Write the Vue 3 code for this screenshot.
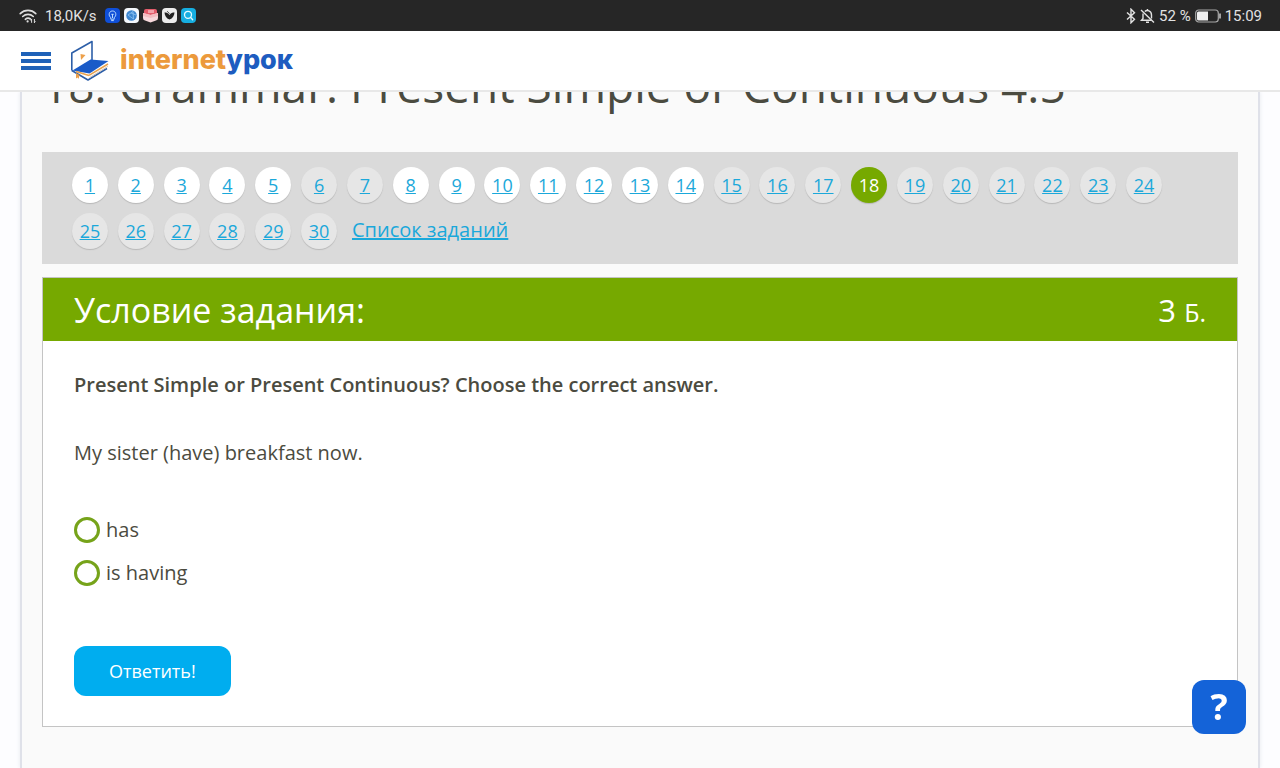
<template>
  <div class="page">
    <!-- Barra de estado -->
    <div class="status-bar">
      <div class="status-group">
        <svg class="wifi" viewBox="0 0 18 16" fill="none" stroke="#dedede" stroke-width="1.6" stroke-linecap="round">
          <path d="M1.2 5.6C5.6 1.3 12.4 1.3 16.8 5.6"></path>
          <path d="M3.7 8.5C6.8 5.6 11.2 5.6 14.3 8.5"></path>
          <path d="M6.3 11.3C7.9 9.9 10 9.9 11.4 11"></path>
          <circle cx="8.6" cy="13.4" r="1.1" fill="#dedede" stroke="none"></circle>
          <path d="M12.6 14.4v-3M12.6 11.2l-.8.9M15.4 11.4v3M15.4 14.6l.8-.9" stroke-width="1"></path>
        </svg>
        <span>18,0K/s</span>
        <div class="app-icons">
          <svg viewBox="0 0 15 15">
            <rect width="15" height="15" rx="4" fill="#0f4fd8"></rect>
            <path d="M5.8 9.6C3.2 7.9 3.7 3 7.5 3s4.3 4.9 1.7 6.6v1.6H5.8z" fill="none" stroke="#bcdcff" stroke-width="1"></path>
            <path d="M6.2 12.6h2.6M7.5 6v4M6.3 6.3h2.4" stroke="#bcdcff" stroke-width="1"></path>
          </svg>
          <svg viewBox="0 0 15 15">
            <rect width="15" height="15" rx="4" fill="#f4f8fc"></rect>
            <circle cx="7.5" cy="7.5" r="5.3" fill="#3d86cf"></circle>
            <path d="M4 7l5-3.5M4 7l5.5 4M9 3.5l.5 7.5M7 5l5 2" stroke="#8dc4f2" stroke-width=".8" fill="none"></path>
          </svg>
          <svg viewBox="0 0 15 15">
            <path d="M1 3q0-2 2-2h9q2 0 2 2v4H1z" fill="#e35d6c"></path>
            <path d="M5 2h6v3H5z" fill="#f3a2aa"></path>
            <path d="M0 5l7.5 2L15 5v5q0 2-2 2.6L7.5 14.5 2 12.6Q0 12 0 10z" fill="#f7d9dc"></path>
            <path d="M0 5l7.5 2L15 5v3l-7.5 2L0 8z" fill="#f4bdc2"></path>
          </svg>
          <svg viewBox="0 0 15 15">
            <rect width="15" height="15" rx="4" fill="#ececec"></rect>
            <path d="M2.5 4.5c2 0 3.8.6 5 2.6 1.2-2 3-2.6 5-2.6-.2 3-1.8 6-5 7-3.2-1-4.8-4-5-7z" fill="#222"></path>
            <path d="M5.2 3.2l2.3 2.5" stroke="#222" stroke-width=".8"></path>
          </svg>
          <svg viewBox="0 0 15 15" fill="none" stroke="#e6fbff" stroke-width="1.3" stroke-linecap="round">
            <rect width="15" height="15" rx="4" fill="#16aee0" stroke="none"></rect>
            <circle cx="7" cy="6.8" r="3.5"></circle>
            <path d="M9.7 9.5l2 2.2"></path>
          </svg>
        </div>
      </div>

      <div class="status-group status-right">
        <svg class="bluetooth" viewBox="0 0 10 16" fill="none" stroke="#e2e2e2" stroke-width="1.4">
          <path d="M1 4.5l7.5 6.8L5 14.8V1.2l3.5 3.5L1 11.5"></path>
        </svg>
        <svg class="bell" viewBox="0 0 15 16" fill="none" stroke="#e2e2e2" stroke-width="1.4">
          <path d="M4.8 3.5C7 1.5 11.5 2.6 11.5 7v3.5M3 5.5V10.5L1.5 12.3H11.5"></path>
          <path d="M1 2l13 12.5M7.5 1v1.8M6 14.3h3"></path>
        </svg>
        <span>52 %</span>
        <svg class="battery" viewBox="0 0 26 14">
          <rect x=".7" y="1" width="22.6" height="12" rx="3" fill="none" stroke="#a8a8a8" stroke-width="1.2"></rect>
          <path d="M3.5 2.5H13v9H3.5q-1.5 0-1.5-1.5V4q0-1.5 1.5-1.5z" fill="#efefef"></path>
          <path d="M25 4.5v5" stroke="#d8d8d8" stroke-width="1.4"></path>
        </svg>
        <span>15:09</span>
      </div>
    </div>

    <!-- Cabecera -->
    <header class="header">
      <button class="menu-button" type="button" aria-label="Меню">
        <span></span>
        <span></span>
        <span></span>
      </button>
      <a class="logo" href="#">
        <svg viewBox="0 0 40 42" fill="none">
          <path d="M1.8 30.5V13L22 1.5V21.5" stroke="#2d5fa8" stroke-width="1.6" stroke-linejoin="round"></path>
          <path d="M1.8 30.5L18 40 37 28.5" stroke="#2d5fa8" stroke-width="1.6" stroke-linejoin="round"></path>
          <path d="M2.5 30.5L20.5 19.5 38.5 21 19.5 33.5z" fill="#1a5bc8"></path>
          <path d="M19 35.4L38 24M6 31.6L19 35.4" stroke="#e9a24d" stroke-width="1.6"></path>
          <path d="M19.5 37.6L38 26.3" stroke="#d4c5b5" stroke-width="1"></path>
          <path d="M10.5 14l5 1-4.5 5z" fill="#eda04a"></path>
          <path d="M6 33l3.5 2-.8 4-1-1.5-1.7 1z" fill="#eda04a"></path>
        </svg>
        <span class="logo-text"><span>internet</span><b>урок</b></span>
      </a>
    </header>

    <main class="content">
      <div class="frame">
        <h1 class="title">18. Grammar: Present Simple or Continuous 4.5</h1>

        <nav class="task-nav">
          <template v-for="n in total" :key="n">
            <span v-if="n === current" class="task current">{{ n }}</span>
            <a v-else href="#" class="task" :class="{ done: done.includes(n) }">{{ n }}</a>
          </template>
          <a href="#" class="task-list">Список заданий</a>
        </nav>

        <section class="card">
          <div class="card-header">
            <h2>Условие задания:</h2>
            <div class="points">3 <small>Б.</small></div>
          </div>
          <form class="card-body" @submit.prevent>
            <p class="question">Present Simple or Present Continuous? Choose the correct answer.</p>
            <p class="sentence">My sister (have) breakfast now.</p>
            <div class="options">
              <label v-for="option in options" :key="option" class="option">
                <input v-model="answer" type="radio" name="answer" :value="option" />
                {{ option }}
              </label>
            </div>
            <button class="btn-answer" type="submit">Ответить!</button>
          </form>
        </section>
      </div>
    </main>

    <button class="btn-help" type="button">?</button>
  </div>
</template>

<script setup>
import { ref } from 'vue'

const total = 30
const current = 18
const done = [1, 2, 3, 4, 5, 8, 9, 10, 11, 12, 13, 14]
const options = ['has', 'is having']
const answer = ref('')
</script>

<style>
body {
  margin: 0;
  background: #fdfdff;
}
</style>

<style scoped>
.page {
  display: flex;
  flex-direction: column;
  height: 100vh;
  font-family: 'Open Sans', 'Noto Sans', sans-serif;
  font-size: 20px;
  color: #4b4b40;
}

.status-bar {
  flex: none;
  display: flex;
  align-items: center;
  justify-content: space-between;
  height: 31px;
  padding: 0 18px 0 19px;
  box-sizing: border-box;
  background: #262626;
  color: #e2e2e2;
  font-family: Roboto, sans-serif;
  font-size: 15px;
}

.status-group {
  display: flex;
  align-items: center;
  gap: 8px;
}

.status-right {
  gap: 4px;
}

.wifi {
  width: 18px;
  height: 16px;
}

.app-icons {
  display: flex;
  gap: 4px;
}

.app-icons svg {
  width: 15px;
  height: 15px;
}

.bluetooth {
  width: 10px;
  height: 16px;
}

.bell {
  width: 15px;
  height: 16px;
}

.battery {
  width: 26px;
  height: 14px;
}

.header {
  flex: none;
  display: flex;
  align-items: center;
  gap: 19px;
  height: 61px;
  padding: 0 21px;
  box-sizing: border-box;
  background: #fff;
  border-bottom: 2px solid #e8e8e8;
}

.menu-button {
  display: flex;
  flex-direction: column;
  gap: 3px;
  width: 30px;
  padding: 0;
  background: none;
  border: none;
  cursor: pointer;
}

.menu-button span {
  height: 4px;
  background: #1f62b8;
}

.logo {
  display: flex;
  align-items: center;
  gap: 10px;
  text-decoration: none;
}

.logo svg {
  width: 40px;
  height: 42px;
}

.logo-text {
  display: flex;
  padding-bottom: 2px;
  font-family: Inter, 'Open Sans', sans-serif;
  font-size: 27px;
  font-weight: 800;
  line-height: 30px;
  color: #ec9a3c;
}

.logo-text b {
  font-weight: 800;
  color: #1d5cc0;
}

.content {
  flex: 1;
  display: flex;
  min-height: 0;
  padding: 0 20px;
  overflow: hidden;
}

.frame {
  flex: 1;
  min-width: 0;
  padding: 0 20px;
  background: #fafafa;
  border: solid #dfe1e9;
  border-width: 0 2px;
  box-shadow: 0 0 4px #e6e8ee;
}

.title {
  margin: -31px 0 43px;
  font-size: 46px;
  font-weight: 400;
  line-height: 48px;
}

.task-nav {
  display: grid;
  grid-template-columns: repeat(24, minmax(0, 1fr));
  gap: 10px;
  padding: 15px 76px 15px 30px;
  background: #dadada;
}

.task {
  justify-self: center;
  width: 36px;
  height: 36px;
  border-radius: 50%;
  background: #e6e6e6;
  box-shadow: 0 1px 1px #b8b8b8;
  color: #1ba8da;
  font-size: 18px;
  line-height: 36px;
  text-align: center;
}

.task.done {
  background: #fff;
}

.task.current {
  background: #76a900;
  color: #fff;
}

.task-list {
  grid-column: span 6;
  padding-left: 5px;
  color: #1ba8da;
  line-height: 34px;
}

.card {
  margin-top: 13px;
  background: #fff;
  border: 1px solid #c4c4c4;
}

.card-header {
  display: flex;
  align-items: center;
  justify-content: space-between;
  height: 63px;
  padding: 0 31px;
  background: #76a900;
  color: #fff;
}

.card-header h2 {
  margin: 0;
  font-size: 34px;
  font-weight: 400;
}

.points {
  font-size: 31px;
}

.points small {
  font-size: 25px;
}

.card-body {
  padding: 30px 31px;
}

.question,
.sentence {
  margin: 0;
  line-height: 28px;
}

.question {
  font-weight: 600;
}

.sentence {
  margin-top: 40px;
}

.options {
  display: flex;
  flex-direction: column;
  align-items: flex-start;
  gap: 15px;
  margin-top: 49px;
}

.option {
  display: flex;
  align-items: center;
  gap: 6px;
  line-height: 28px;
  cursor: pointer;
}

.option input {
  appearance: none;
  width: 26px;
  height: 26px;
  margin: 0;
  border: 3px solid #76a31a;
  border-radius: 50%;
  background: #fff;
}

.option input:checked {
  background: #76a900;
  box-shadow: inset 0 0 0 4px #fff;
}

.btn-answer {
  display: block;
  height: 50px;
  margin-top: 59px;
  padding: 0 35px;
  background: #00adef;
  border: none;
  border-radius: 12px;
  color: #fff;
  font-family: inherit;
  font-size: 18px;
  cursor: pointer;
}

.btn-help {
  position: fixed;
  right: 34px;
  bottom: 34px;
  z-index: 3;
  width: 54px;
  height: 54px;
  padding: 0;
  background: #1463d8;
  border: none;
  border-radius: 12px;
  color: #fff;
  font-family: inherit;
  font-size: 36px;
  font-weight: 700;
  line-height: 54px;
  cursor: pointer;
}
</style>
